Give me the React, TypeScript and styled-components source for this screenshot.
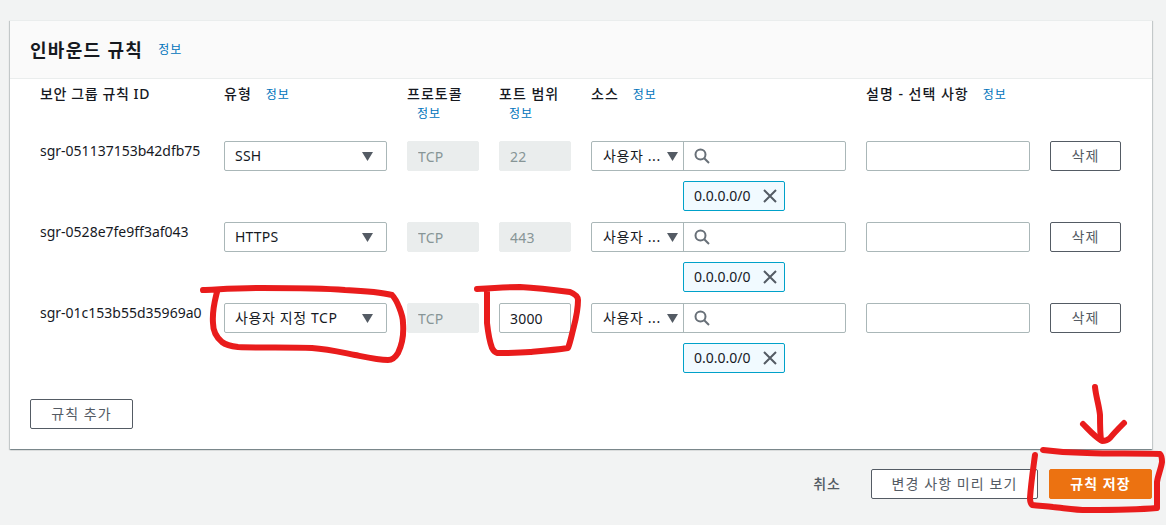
import React from 'react';
import styled, { createGlobalStyle } from 'styled-components';

const GlobalStyle = createGlobalStyle`
  html, body {
    margin: 0;
    padding: 0;
    background: #f2f3f3;
    overflow: hidden;
  }
  body {
    font-family: "Noto Sans", "Noto Sans CJK KR", "Liberation Sans", sans-serif;
    font-size: 14px;
    line-height: 20px;
    color: #16191f;
  }
  * {
    box-sizing: border-box;
  }
`;

const Page = styled.div`
  position: relative;
  width: 1166px;
  height: 525px;
  padding: 20px 14px 0 10px;
  overflow: hidden;
`;

const Panel = styled.section`
  height: 429px;
  background: #fff;
  box-shadow: 0 1px 1px 0 rgba(0, 28, 36, 0.3), 1px 1px 1px 0 rgba(0, 28, 36, 0.15),
    -1px 1px 1px 0 rgba(0, 28, 36, 0.15);
  border-top: 1px solid #eaeded;
`;

const PanelHeader = styled.header`
  display: flex;
  align-items: center;
  gap: 15px;
  height: 58px;
  padding: 0 20px;
  background: #fafafa;
  border-bottom: 1px solid #eaeded;
`;

const Title = styled.h2`
  margin: 0;
  font-size: 18px;
  line-height: 24px;
  font-weight: 700;
  letter-spacing: 1.3px;
`;

const InfoLink = styled.a<{ $block?: boolean }>`
  color: #0073bb;
  font-size: 12px;
  line-height: 20px;
  font-weight: 400;
  letter-spacing: 1px;
  ${(p) => (p.$block ? 'display: block; padding-left: 10px;' : 'padding-top: 1px;')}
`;

const RuleGrid = styled.div`
  display: grid;
  grid-template-columns: 164px 163px 72px 72px 255px 164px 71px;
  column-gap: 20px;
  padding-left: 30px;
`;

const HeadCell = styled.div<{ $inline?: boolean }>`
  height: 62px;
  padding-top: 5px;
  font-weight: 500;
  letter-spacing: 1px;
  ${(p) => (p.$inline ? 'display: flex; gap: 14px; align-items: flex-start;' : '')}
`;

const Label = styled.span<{ $tight?: boolean }>`
  display: block;
  white-space: nowrap;
  ${(p) => (p.$tight ? 'letter-spacing: 0.6px;' : '')}
`;

const RuleRow = styled(RuleGrid)`
  height: 81px;
`;

const RuleId = styled.div`
  white-space: nowrap;
  color: #16191f;
`;

const Select = styled.div`
  display: flex;
  align-items: center;
  justify-content: space-between;
  height: 30px;
  padding: 0 13px 0 10px;
  background: #fff;
  border: 1px solid #aab7b8;
  border-radius: 2px;
`;

const SelectText = styled.span<{ $korean?: boolean }>`
  letter-spacing: ${(p) => (p.$korean ? '0.6px' : '0.2px')};
  white-space: nowrap;
`;

const Arrow = styled.svg`
  width: 11px;
  height: 9px;
  flex: none;
  fill: #545b64;
`;

const Field = styled.input<{ $disabled?: boolean }>`
  display: block;
  width: 100%;
  height: 30px;
  padding: 0 10px;
  font: inherit;
  letter-spacing: 0.2px;
  color: ${(p) => (p.$disabled ? '#879596' : '#16191f')};
  background: ${(p) => (p.$disabled ? '#eaeded' : '#fff')};
  border: 1px solid ${(p) => (p.$disabled ? '#eaeded' : '#aab7b8')};
  border-radius: 2px;
  outline: none;
`;

const SourceBox = styled.div`
  display: flex;
  height: 30px;
  background: #fff;
  border: 1px solid #aab7b8;
  border-radius: 2px;
`;

const SourceSelect = styled.div`
  display: flex;
  align-items: center;
  justify-content: space-between;
  width: 92px;
  flex: none;
  padding: 0 5px 0 11px;
  border-right: 1px solid #aab7b8;
  color: #16191f;
  white-space: nowrap;
  overflow: hidden;
`;

const SearchWrap = styled.div`
  display: flex;
  align-items: center;
  flex: 1;
  padding-left: 10px;
`;

const Chip = styled.div`
  display: flex;
  align-items: center;
  justify-content: space-between;
  width: 102px;
  height: 30px;
  margin: 10px 0 0 92px;
  padding: 0 7px 0 10px;
  background: #f1faff;
  border: 1px solid #00a1c9;
  border-radius: 2px;
`;

const Button = styled.button<{ $primary?: boolean }>`
  height: 30px;
  padding: 0;
  font: inherit;
  letter-spacing: 1.1px;
  font-weight: ${(p) => (p.$primary ? 700 : 400)};
  color: ${(p) => (p.$primary ? '#fff' : '#545b64')};
  background: ${(p) => (p.$primary ? '#ec7211' : '#fff')};
  border: 1px solid ${(p) => (p.$primary ? '#ec7211' : '#545b64')};
  border-radius: 2px;
  white-space: nowrap;
`;

const DeleteButton = styled(Button)`
  width: 71px;
`;

const AddButton = styled(Button)`
  width: 103px;
  display: block;
`;

const AddRow = styled.div`
  padding: 15px 0 0 20px;
`;

const Footer = styled.footer`
  display: flex;
  align-items: center;
  justify-content: flex-end;
  padding-top: 20px;
`;

const CancelLink = styled.span`
  color: #545b64;
  margin-right: 30px;
  font-weight: 500;
  letter-spacing: 1px;
`;

const PreviewButton = styled(Button)`
  width: 167px;
  margin-right: 11px;
`;

const SaveButton = styled(Button)`
  width: 103px;
`;

const Scribble = styled.svg`
  position: absolute;
  left: 0;
  top: 0;
  width: 1166px;
  height: 525px;
  pointer-events: none;
  fill: none;
  stroke: #e91c1c;
  stroke-width: 6px;
  stroke-linecap: round;
  stroke-linejoin: round;
`;

const rules = [
  { id: 'sgr-051137153b42dfb75', type: 'SSH', port: '22', fixed: true },
  { id: 'sgr-0528e7fe9ff3af043', type: 'HTTPS', port: '443', fixed: true },
  { id: 'sgr-01c153b55d35969a0', type: '사용자 지정 TCP', port: '3000', fixed: false },
];

function CaretIcon() {
  return (
    <Arrow viewBox="0 0 11 9">
      <path d="M0 0h11L5.5 9z" />
    </Arrow>
  );
}

function SearchIcon() {
  return (
    <svg width="16" height="16" viewBox="0 0 16 16" fill="none" stroke="#687078" strokeWidth="2">
      <circle cx="6.5" cy="6.5" r="5" />
      <path d="M10.2 10.2 15 15" />
    </svg>
  );
}

function CloseIcon() {
  return (
    <svg width="14" height="14" viewBox="0 0 14 14" fill="none" stroke="#545b64" strokeWidth="2">
      <path d="M1 1l12 12M13 1 1 13" />
    </svg>
  );
}

export default function App() {
  return (
    <Page>
      <GlobalStyle />
      <Panel>
        <PanelHeader>
          <Title>인바운드 규칙</Title>
          <InfoLink>정보</InfoLink>
        </PanelHeader>
        <RuleGrid>
          <HeadCell><Label $tight>보안 그룹 규칙 ID</Label></HeadCell>
          <HeadCell $inline><Label>유형</Label><InfoLink>정보</InfoLink></HeadCell>
          <HeadCell><Label>프로토콜</Label><InfoLink $block>정보</InfoLink></HeadCell>
          <HeadCell><Label>포트 범위</Label><InfoLink $block>정보</InfoLink></HeadCell>
          <HeadCell $inline><Label>소스</Label><InfoLink>정보</InfoLink></HeadCell>
          <HeadCell $inline><Label>설명 - 선택 사항</Label><InfoLink>정보</InfoLink></HeadCell>
          <HeadCell />
        </RuleGrid>
        {rules.map((rule) => (
          <RuleRow key={rule.id}>
            <RuleId>{rule.id}</RuleId>
            <Select>
              <SelectText $korean={!rule.fixed}>{rule.type}</SelectText>
              <CaretIcon />
            </Select>
            <Field $disabled value="TCP" readOnly />
            <Field $disabled={rule.fixed} value={rule.port} readOnly />
            <div>
              <SourceBox>
                <SourceSelect>
                  <SelectText $korean>사용자 ...</SelectText>
                  <CaretIcon />
                </SourceSelect>
                <SearchWrap>
                  <SearchIcon />
                </SearchWrap>
              </SourceBox>
              <Chip>
                0.0.0.0/0
                <CloseIcon />
              </Chip>
            </div>
            <Field readOnly />
            <DeleteButton>삭제</DeleteButton>
          </RuleRow>
        ))}
        <AddRow>
          <AddButton>규칙 추가</AddButton>
        </AddRow>
      </Panel>
      <Footer>
        <CancelLink>취소</CancelLink>
        <PreviewButton>변경 사항 미리 보기</PreviewButton>
        <SaveButton $primary>규칙 저장</SaveButton>
      </Footer>
      <Scribble viewBox="0 0 1166 525">
        <path d="M203 290C225 289 240 288 262 288C290 288 320 288 345 290C365 291 380 292 392 295C397 300 403 315 403 323C404 335 402 345 398 353C395 358 392 360 388 360C378 360 365 357 355 355C340 352 328 349 312 348C290 347 260 348 238 347C230 346 226 345 222 342C216 337 213 330 213 323C212 310 215 300 217 292" />
        <path d="M477 289C490 288 505 287 520 287C540 288 555 290 570 292C575 294 578 296 578 300C578 312 575 322 573 330C571 338 570 343 568 348C555 350 542 351 530 352C518 353 507 353 497 353C494 352 493 350 492 348C489 340 488 332 487 323C487 312 487 302 487 292" />
        <path d="M1095 387C1096 397 1099 405 1100 415C1100 424 1100 432 1101 440" />
        <path d="M1083 424C1089 430 1095 437 1102 441C1105 441 1108 440 1110 438C1114 433 1119 428 1124 423" />
        <path d="M1043 450C1058 452 1072 453 1087 453C1112 454 1136 453 1160 454C1162 456 1162 459 1162 462C1161 469 1158 475 1157 482C1157 491 1157 500 1157 508C1134 510 1110 510 1087 510C1075 510 1064 508 1053 507C1046 506 1039 506 1032 505C1030 503 1030 501 1030 498C1031 483 1033 470 1035 455" />
      </Scribble>
    </Page>
  );
}
